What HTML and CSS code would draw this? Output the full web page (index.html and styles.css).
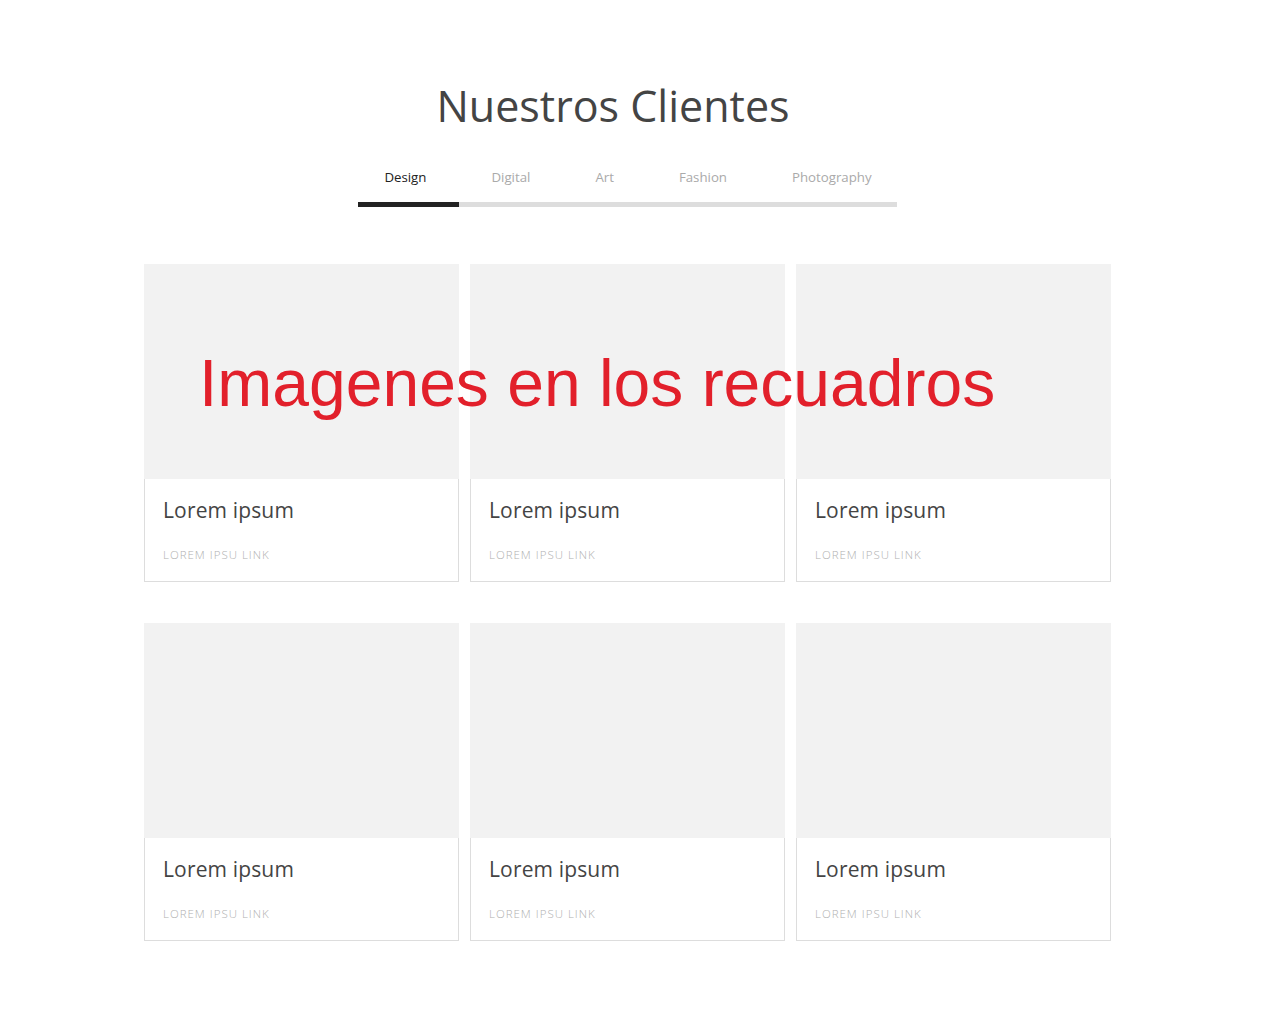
FILE: index.html
```html
<!DOCTYPE html>
<html lang="es">
<head>
<meta charset="utf-8">
<title>Nuestros Clientes</title>
<link rel="stylesheet" href="styles.css">
</head>
<body>
<section class="clients">
  <h1 class="title">Nuestros Clientes</h1>
  <nav class="tabs">
    <a class="tab active">Design</a>
    <a class="tab">Digital</a>
    <a class="tab">Art</a>
    <a class="tab">Fashion</a>
    <a class="tab last">Photography</a>
  </nav>
  <div class="grid-wrap">
    <div class="grid">
      <div class="card"><div class="card-img"></div><div class="card-body"><div class="card-title">Lorem ipsum</div><div class="card-link">LOREM IPSU LINK</div></div></div>
      <div class="card"><div class="card-img"></div><div class="card-body"><div class="card-title">Lorem ipsum</div><div class="card-link">LOREM IPSU LINK</div></div></div>
      <div class="card"><div class="card-img"></div><div class="card-body"><div class="card-title">Lorem ipsum</div><div class="card-link">LOREM IPSU LINK</div></div></div>
      <div class="card"><div class="card-img"></div><div class="card-body"><div class="card-title">Lorem ipsum</div><div class="card-link">LOREM IPSU LINK</div></div></div>
      <div class="card"><div class="card-img"></div><div class="card-body"><div class="card-title">Lorem ipsum</div><div class="card-link">LOREM IPSU LINK</div></div></div>
      <div class="card"><div class="card-img"></div><div class="card-body"><div class="card-title">Lorem ipsum</div><div class="card-link">LOREM IPSU LINK</div></div></div>
    </div>
    <div class="note">Imagenes en los recuadros</div>
  </div>
</section>
</body>
</html>
```
FILE: styles.css
```css
html, body {
  margin: 0;
  padding: 0;
  background: #fff;
}
body {
  font-family: "Open Sans", "Noto Sans", sans-serif;
  color: #444;
}
.clients {
  width: 967px;
  margin-left: 144px;
  padding-top: 77px;
  padding-bottom: 69px;
}
.title {
  margin: 0;
  font-size: 43px;
  line-height: 57.6px;
  font-weight: 400;
  color: #444;
  text-align: center;
  padding-right: 29px;
}
.tabs {
  display: flex;
  width: max-content;
  margin: 32px auto 0;
  border-bottom: 5px solid #ddd;
}
.tab {
  display: block;
  font-size: 13.25px;
  line-height: 20px;
  color: #aaa;
  padding: 0 32.5px 15px;
  margin-bottom: -5px;
  border-bottom: 5px solid transparent;
  cursor: pointer;
}
.tab.active {
  color: #222;
  padding-left: 26px;
  border-bottom-color: #222;
}
.tab.last {
  padding-right: 25px;
}
.grid-wrap {
  position: relative;
  margin-top: 57px;
}
.grid {
  display: grid;
  grid-template-columns: repeat(3, 315px);
  column-gap: 11px;
  row-gap: 41px;
}
.card-img {
  height: 215px;
  background: #f2f2f2;
}
.card-body {
  border: 1px solid #ddd;
  border-top: none;
  padding: 18px 18px 18px;
}
.card-title {
  font-size: 21px;
  line-height: 26px;
  font-weight: 400;
  letter-spacing: 0.15px;
  color: #444;
}
.card-link {
  margin-top: 24px;
  font-size: 11.5px;
  line-height: 16px;
  font-weight: 300;
  letter-spacing: 1px;
  color: #b0b0b0;
}
.note {
  position: absolute;
  left: 55px;
  top: 86px;
  font-family: "Liberation Sans", Arial, sans-serif;
  font-size: 66px;
  line-height: 1;
  color: #e2202b;
  white-space: nowrap;
}
```
